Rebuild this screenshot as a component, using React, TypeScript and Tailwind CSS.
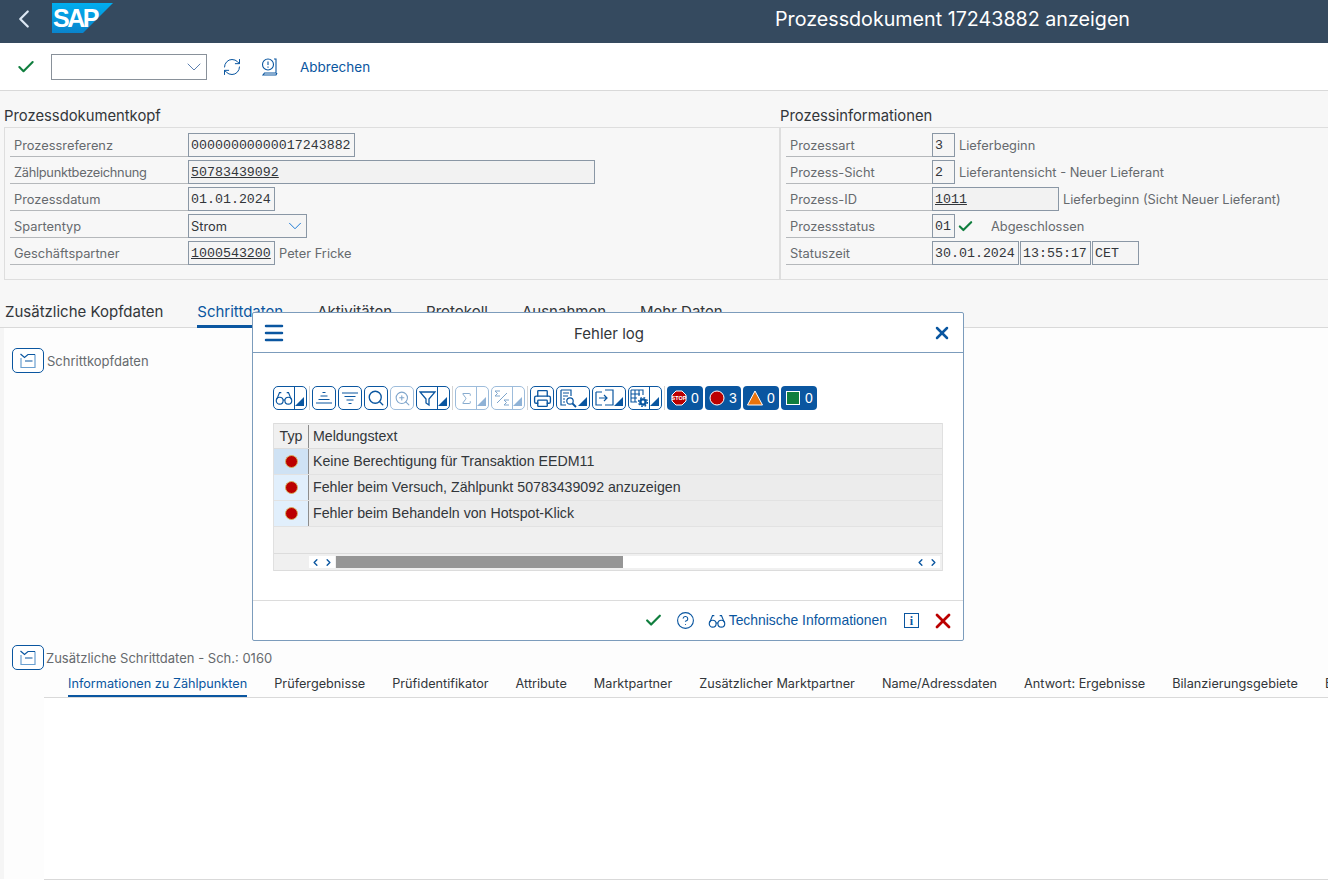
import { Check, ChevronDown, ChevronLeft, ChevronRight, CircleHelp, Menu, Printer, RefreshCw, Search, Sigma, X, ZoomIn } from "lucide-react";
import type { ReactNode } from "react";

const BLUE = "#0a56a0";

const Corner = ({ light }: { light?: boolean }) => (
  <svg width="11" height="11" viewBox="0 0 11 11" className="absolute right-[1px] bottom-[2px]">
    <polygon points="10,1 10,10 1,10" fill={light ? "#8fb2d6" : BLUE} />
  </svg>
);

const Glasses = ({ size = 20 }: { size?: number }) => (
  <svg width={size} height={size} viewBox="0 0 20 20" fill="none" stroke="currentColor" strokeWidth="1.3">
    <circle cx="5.2" cy="13" r="3.8" />
    <circle cx="14.8" cy="13" r="3.8" />
    <path d="M9 12.5c.7-.5 1.300-.5 2 0M2 11.500 5 4h2M18 11.500 15 4h-2" />
  </svg>
);

const ToolBtn = ({ w, split, menu, light, children }: { w: string; split?: boolean; menu?: boolean; light?: boolean; children: ReactNode }) => (
  <div className={`relative h-[24px] shrink-0 flex items-center rounded-[5px] border bg-white ${w} ${light ? "border-[#9dbcdb] text-[#7fa5cb]" : "border-[#0a56a0] text-[#0a56a0]"}`}>
    <div className={`flex items-center justify-center h-full ${split ? "w-[20px]" : menu ? "w-[22px]" : "w-full"}`}>{children}</div>
    {split && <div className={`h-full border-l ${light ? "border-[#9dbcdb]" : "border-[#0a56a0]"}`} />}
    {(split || menu) && <Corner light={light} />}
  </div>
);

const Sep = () => <div className="w-px h-[24px] bg-[#d5d5d5] shrink-0" />;

const StatusBtn = ({ count, children }: { count: number; children: ReactNode }) => (
  <div className="w-[36px] h-[24px] rounded-[4px] bg-[#0a56a0] shrink-0 flex items-center pl-[4px] gap-[4px] text-white text-[14px]">
    {children}
    <span>{count}</span>
  </div>
);

const CollapseBtn = () => (
  <div className="w-[32px] h-[25px] rounded-[5px] border border-[#0a56a0] bg-white flex items-center justify-center shrink-0">
    <svg width="16" height="16" viewBox="0 0 16 16" fill="none" strokeWidth="1.200">
      <path d="M1 5v9.500h14V1.500" stroke="#6a9fd0" />
      <path d="M.5 1 4.500 4.500 8 1.500h7M5 8h7.500" stroke="#0a56a0" />
    </svg>
  </div>
);

const Field = ({ w, children, link, filled }: { w: string; children?: ReactNode; link?: boolean; filled?: boolean }) => (
  <div className={`h-[24px] shrink-0 border border-[#8a97a5] flex items-center pl-[2px] pt-[2px] font-['Liberation_Mono',monospace] text-[13.300px] text-[#32363a] overflow-hidden whitespace-nowrap ${w} ${link ? "underline" : ""} ${filled ? "bg-[#f2f2f2]" : "bg-[#f5f5f5]"}`}>
    {children}
  </div>
);

const Row = ({ label, labelW, children }: { label: ReactNode; labelW: string; children: ReactNode }) => (
  <div className="flex h-[24px] items-center text-[12.850px]">
    <div className={`h-full shrink-0 border-b border-[#b5b8bb] flex items-center pl-[4px] pt-[2px] text-[#666a6e] ${labelW}`}>{label}</div>
    {children}
  </div>
);

const Note = ({ children }: { children: ReactNode }) => <span className="ml-[4px] pt-[2px] text-[#666a6e] whitespace-nowrap">{children}</span>;

const topTabs = ["Zusätzliche Kopfdaten", "Schrittdaten", "Aktivitäten", "Protokoll", "Ausnahmen", "Mehr Daten"];
const lowerTabs = ["Informationen zu Zählpunkten", "Prüfergebnisse", "Prüfidentifikator", "Attribute", "Marktpartner", "Zusätzlicher Marktpartner", "Name/Adressdaten", "Antwort: Ergebnisse", "Bilanzierungsgebiete", "E"];
const messages = ["Keine Berechtigung für Transaktion EEDM11", "Fehler beim Versuch, Zählpunkt 50783439092 anzuzeigen", "Fehler beim Behandeln von Hotspot-Klick"];

const ScrollArrows = () => (
  <div className="flex w-[26px] h-[12px] bg-white items-center justify-center gap-[2px] text-[#0a56a0]">
    <ChevronLeft size={11} strokeWidth={3} />
    <ChevronRight size={11} strokeWidth={3} />
  </div>
);

const Dialog = () => (
  <div className="absolute left-[252px] top-[312px] w-[712px] h-[329px] bg-white border border-[#7c9cbc] rounded-[2px] flex flex-col font-['Liberation_Sans',Arial,sans-serif]">
    <div className="h-[40px] shrink-0 border-b border-[#7c9cbc] flex items-center justify-between pl-[9px] pr-[11px] text-[#0a56a0]">
      <Menu size={24} strokeWidth={2.500} />
      <span className="pt-[4px] font-['Inter',sans-serif] text-[15px] text-[#32363a]">Fehler log</span>
      <X size={20} strokeWidth={3} />
    </div>

    <div className="flex-1 pl-[20px] pr-[20px] pt-[33px]">
      <div className="flex items-center gap-[2px] h-[24px]">
        <ToolBtn w="w-[34px]" split><Glasses size={18} /></ToolBtn>
        <Sep />
        <ToolBtn w="w-[24px]">
          <svg width="16" height="14" viewBox="0 0 16 14" stroke="currentColor" strokeWidth="1.200"><path d="M6.500 1.500h3M4.500 5h7M2.500 8.500h11M0 12h16" /></svg>
        </ToolBtn>
        <ToolBtn w="w-[24px]">
          <svg width="16" height="14" viewBox="0 0 16 14" stroke="currentColor" strokeWidth="1.200"><path d="M0 2h16M2.500 5.500h11M4.500 9h7M6.500 12.500h3" /></svg>
        </ToolBtn>
        <ToolBtn w="w-[24px]"><Search size={18} strokeWidth={1.800} /></ToolBtn>
        <ToolBtn w="w-[24px]" light><ZoomIn size={17} strokeWidth={1.500} /></ToolBtn>
        <ToolBtn w="w-[34px]" split>
          <svg width="17" height="17" viewBox="0 0 17 17" fill="none" stroke="currentColor" strokeWidth="1.300"><path d="M1 2h15l-6 7v6l-3-2V9z" /></svg>
        </ToolBtn>
        <Sep />
        <ToolBtn w="w-[34px]" split light><Sigma size={15} strokeWidth={1.500} /></ToolBtn>
        <ToolBtn w="w-[34px]" split light>
          <svg width="16" height="16" viewBox="0 0 16 16" fill="none" stroke="currentColor" strokeWidth="1"><path d="M6 1H1l2.500 2.500L1 6h5M15 10h-5l2.500 2.500L10 15h5M3 13 13 3" /></svg>
        </ToolBtn>
        <Sep />
        <ToolBtn w="w-[24px]"><Printer size={19} strokeWidth={1.700} /></ToolBtn>
        <ToolBtn w="w-[34px]" menu>
          <svg width="18" height="19" viewBox="0 0 18 19" fill="none" stroke="currentColor" strokeWidth="1.200"><path d="M2 1h10v6M2 1v15h5M4 4h6M4 7h5M4 10h2M4 13h2" /><circle cx="11" cy="12" r="3.200" /><path d="m13.500 14.500 3.500 3.500" strokeWidth="1.800" /></svg>
        </ToolBtn>
        <ToolBtn w="w-[34px]" menu>
          <svg width="19" height="18" viewBox="0 0 19 18" fill="none" stroke="currentColor" strokeWidth="1.200"><path d="M1 3h6M1 3v13h6M10 1h8v15h-8M4 9h8M9 6l3 3-3 3" /></svg>
        </ToolBtn>
        <ToolBtn w="w-[34px]" split>
          <svg width="19" height="19" viewBox="0 0 19 19" fill="none" stroke="currentColor" strokeWidth="1.100"><path d="M1 1h12v5M1 1v12h6M1 5h9M1 9h6M5 1v12M9 1v6" /><circle cx="13" cy="13" r="2.600" strokeWidth="2.400" /><circle cx="13" cy="13" r="4.400" strokeWidth="1.400" strokeDasharray="1.700 1.750" /></svg>
        </ToolBtn>
        <Sep />
        <StatusBtn count={0}>
          <svg width="16" height="16" viewBox="0 0 16 16">
            <polygon points="5,1 11,1 15,5 15,11 11,15 5,15 1,11 1,5" fill="#bb0000" stroke="#fff" />
            <text x="8" y="10" textAnchor="middle" fontFamily="Liberation Sans" fontSize="5.500" fontWeight="700" fill="#fff">STOP</text>
          </svg>
        </StatusBtn>
        <StatusBtn count={3}>
          <svg width="16" height="16" viewBox="0 0 16 16"><circle cx="8" cy="8" r="7" fill="#bb0000" stroke="#fff" /></svg>
        </StatusBtn>
        <StatusBtn count={0}>
          <svg width="16" height="16" viewBox="0 0 16 16"><polygon points="8,1 15.500,15 0.500,15" fill="#e9730c" stroke="#fff" /></svg>
        </StatusBtn>
        <StatusBtn count={0}>
          <svg width="16" height="16" viewBox="0 0 16 16"><rect x="1.500" y="1.500" width="13" height="13" fill="#107e3e" stroke="#fff" /></svg>
        </StatusBtn>
      </div>

      <div className="mt-[13px] w-[670px] border-l border-r border-[#e0e0e0] bg-[#f0f0f0] text-[14.200px] text-[#32363a]">
        <div className="flex h-[26px] pt-[1px] border-t border-b border-[#dcdcdc] items-center">
          <div className="w-[35px] h-full border-r border-[#8d8d8d] flex items-center justify-center">Typ</div>
          <div className="pl-[4px]">Meldungstext</div>
        </div>
        {messages.map((text, i) => (
          <div key={text} className="flex h-[26px] border-b border-[#e2e2e2] items-center bg-[#ececec]">
            <div className={`w-[35px] h-full border-r border-[#8d8d8d] flex items-center justify-center ${i === 0 ? "bg-[#cfe2f4]" : "bg-[#e1effc]"}`}>
              <span className="w-[13px] h-[13px] rounded-full bg-[#bb0000] border border-[#d8b060]" />
            </div>
            <div className="pl-[4px] whitespace-nowrap">{text}</div>
          </div>
        ))}
        <div className="h-[27px] border-b border-[#dcdcdc]" />
        <div className="h-[17px] border-b border-[#dcdcdc] flex items-center pr-[2px]">
          <div className="ml-[35px]"><ScrollArrows /></div>
          <div className="w-[287px] h-[12px] bg-[#969696] ml-[1px]" />
          <div className="flex-1 h-[12px] bg-white flex justify-end"><ScrollArrows /></div>
        </div>
      </div>
    </div>

    <div className="h-[40px] shrink-0 border-t border-[#dcdcdc] flex items-center justify-end pr-[8px] text-[#0a56a0]">
      <Check size={19} strokeWidth={2.800} className="text-[#107e3e] mr-[13px]" />
      <CircleHelp size={19} strokeWidth={1.400} className="mr-[13px]" />
      <Glasses size={18} />
      <span className="ml-[3px] mr-[17px] text-[13.900px]">Technische Informationen</span>
      <span className="w-[15px] h-[15px] border border-[#0a56a0] flex items-center justify-center font-['Liberation_Serif',serif] font-bold text-[12px] mr-[12px]">i</span>
      <X size={24} strokeWidth={2.800} className="text-[#bb0000]" />
    </div>
  </div>
);

export default function App() {
  return (
    <div className="relative w-[1328px] h-[889px] overflow-hidden bg-white font-['Inter',sans-serif] text-[13px] text-[#32363a]">
      {/* SHELL HEADER */}
      <div className="h-[43px] bg-[#354a5f] flex items-center text-white">
        <ChevronLeft size={30} strokeWidth={1.800} className="ml-[9px] mr-[13px] -mt-[6px] text-[#dbe7f3]" />
        <svg width="62" height="31" viewBox="0 0 62 31" className="-mt-[6px]">
          <defs>
            <linearGradient id="sap" x1="0" y1="0" x2="0" y2="1">
              <stop offset="0" stopColor="#00aeef" />
              <stop offset="1" stopColor="#0a84cc" />
            </linearGradient>
          </defs>
          <polygon points="0,0 61,0 31,30 0,30" fill="url(#sap)" />
          <text x="1" y="24" fill="#fff" fontFamily="Liberation Sans" fontWeight="700" fontSize="25" letterSpacing="-2.500">SAP</text>
        </svg>
        <div className="ml-[661px] -mt-[4px] whitespace-nowrap text-[19.700px]">Prozessdokument 17243882 anzeigen</div>
      </div>

      {/* TOOLBAR */}
      <div className="h-[48px] border-b border-[#d9d9d9] flex items-center text-[#0a56a0]">
        <Check size={20} strokeWidth={2.500} className="ml-[16px] text-[#107e3e]" />
        <div className="ml-[15px] w-[156px] h-[26px] border border-[#89919a] flex items-center justify-end">
          <ChevronDown size={24} strokeWidth={1} className="text-[#5b7fb0]" />
        </div>
        <RefreshCw size={20} strokeWidth={1.200} className="ml-[15px]" />
        <svg width="18" height="18" viewBox="0 0 18 18" fill="none" stroke="currentColor" strokeWidth="1.100" className="ml-[19px]">
          <circle cx="7" cy="6.500" r="5.500" />
          <path d="M7 3.500v3.500M7 8.500v1.200M13 1h2v14H3.500L2 17h13l1-2" />
        </svg>
        <span className="ml-[21px] pt-[2px] text-[13.500px]">Abbrechen</span>
      </div>

      {/* PROCESS HEADER */}
      <div className="h-[189px] bg-[#f7f7f7] flex">
        <div className="w-[776px] ml-[4px] shrink-0">
          <div className="h-[36px] flex items-end text-[14.800px]">Prozessdokumentkopf</div>
          <div className="h-[153px] border border-[#dedede] pt-[5px] pl-[5px] flex flex-col gap-[3px]">
            <Row label="Prozessreferenz" labelW="w-[178px]"><Field w="w-[167px]">00000000000017243882</Field></Row>
            <Row label={<span className="tracking-[-0.3px]">Zählpunktbezeichnung</span>} labelW="w-[178px]"><Field w="w-[407px]" link filled>50783439092</Field></Row>
            <Row label="Prozessdatum" labelW="w-[178px]"><Field w="w-[87px]">01.01.2024</Field></Row>
            <Row label="Spartentyp" labelW="w-[178px]">
              <div className="w-[119px] h-[24px] border border-[#8a97a5] bg-[#f5f5f5] flex items-center justify-between pl-[2px]">
                <span className="pt-[2px]">Strom</span>
                <ChevronDown size={22} strokeWidth={1} className="text-[#0a6ed1]" />
              </div>
            </Row>
            <Row label="Geschäftspartner" labelW="w-[178px]"><Field w="w-[87px]" link>1000543200</Field><Note>Peter Fricke</Note></Row>
          </div>
        </div>
        <div className="flex-1">
          <div className="h-[36px] flex items-end text-[14.800px]">Prozessinformationen</div>
          <div className="h-[153px] border border-[#dedede] border-r-0 pt-[5px] pl-[5px] flex flex-col gap-[3px]">
            <Row label="Prozessart" labelW="w-[146px]"><Field w="w-[23px]">3</Field><Note>Lieferbeginn</Note></Row>
            <Row label="Prozess-Sicht" labelW="w-[146px]"><Field w="w-[23px]">2</Field><Note>Lieferantensicht - Neuer Lieferant</Note></Row>
            <Row label="Prozess-ID" labelW="w-[146px]"><Field w="w-[127px]" link filled>1011</Field><Note>Lieferbeginn (Sicht Neuer Lieferant)</Note></Row>
            <Row label="Prozessstatus" labelW="w-[146px]">
              <Field w="w-[23px]">01</Field>
              <Check size={17} strokeWidth={3} className="ml-[2px] text-[#107e3e]" />
              <span className="ml-[17px] pt-[2px] text-[#666a6e]">Abgeschlossen</span>
            </Row>
            <Row label="Statuszeit" labelW="w-[146px]">
              <Field w="w-[87px]">30.01.2024</Field>
              <Field w="w-[71px] ml-[1px]">13:55:17</Field>
              <Field w="w-[47px] ml-[1px]">CET</Field>
            </Row>
          </div>
        </div>
      </div>

      {/* MAIN TABS */}
      <div className="h-[48px] bg-[#f7f7f7] border-b border-[#d9d9d9] flex items-end pl-[5px] gap-[34px] text-[15px]">
        {topTabs.map((tab, i) => (
          <div key={tab} className={`h-[30px] -mb-px pt-[2px] flex items-center whitespace-nowrap border-b-[3px] ${i === 1 ? "text-[#0a56a0] border-[#0a56a0]" : "border-transparent"}`}>{tab}</div>
        ))}
      </div>

      {/* STEP DATA */}
      <div className="h-[551px] bg-[#fdfdfd] border-l-[4px] border-[#f5f5f5]">
        <div className="pl-[8px] pt-[20px] h-[317px] flex items-start gap-[3px] text-[#666a6e]">
          <CollapseBtn />
          <span className="mt-[4px]">Schrittkopfdaten</span>
        </div>
        <div className="pl-[8px] h-[25px] flex items-start gap-[2px] text-[#666a6e]">
          <CollapseBtn />
          <span className="mt-[4px] whitespace-nowrap">Zusätzliche Schrittdaten - Sch.: 0160</span>
        </div>
        <div className="ml-[40px] h-[28px] border-b border-[#d9d9d9] flex items-end pl-[24px] gap-[27px] overflow-hidden text-[12.700px]">
          {lowerTabs.map((tab, i) => (
            <div key={tab} className={`h-[28px] -mb-px pt-[2px] shrink-0 flex items-center whitespace-nowrap border-b-[3px] ${i === 0 ? "text-[#0a56a0] border-[#0a56a0]" : "border-transparent"}`}>{tab}</div>
          ))}
        </div>
        <div className="ml-[40px] h-[182px] bg-white border-b border-[#d9d9d9]" />
      </div>

      <Dialog />
    </div>
  );
}
